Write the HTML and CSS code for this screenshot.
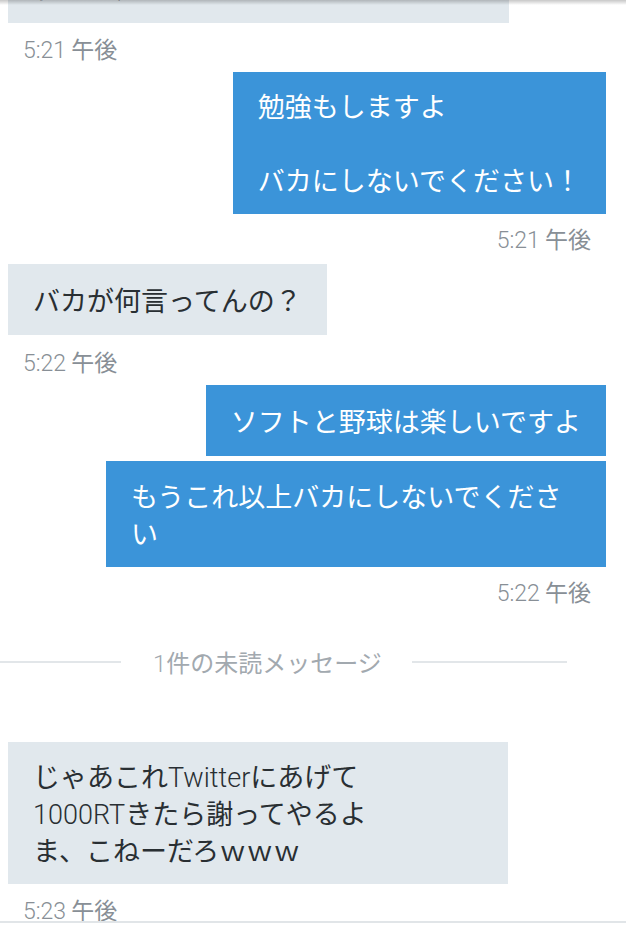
FILE: index.html
```html
<!DOCTYPE html>
<html lang="ja">
<head>
<meta charset="utf-8">
<title>DM</title>
<link rel="stylesheet" href="styles.css">
</head>
<body>
<div class="screen">
  <div class="topshade"></div>
  <div class="thread">
    <div class="msg in first"><div class="bubble">わかったよ</div></div>
    <div class="time left"><span class="lat">5:21</span> 午後</div>

    <div class="msg out"><div class="bubble multi">勉強もしますよ<br><br>バカにしないでください！</div></div>
    <div class="time right"><span class="lat">5:21</span> 午後</div>

    <div class="msg in"><div class="bubble">バカが何言ってんの？</div></div>
    <div class="time left"><span class="lat">5:22</span> 午後</div>

    <div class="msg out"><div class="bubble">ソフトと野球は楽しいですよ</div></div>
    <div class="msg out stacked"><div class="bubble two wide">もうこれ以上バカにしないでくださ<br>い</div></div>
    <div class="time right"><span class="lat">5:22</span> 午後</div>

    <div class="divider">
      <span class="rule r1"></span>
      <span class="label"><span class="lat">1</span>件の未読メッセージ</span>
      <span class="rule r2"></span>
    </div>

    <div class="msg in"><div class="bubble multi big">じゃあこれ<span class="lat">Twitter</span>にあげて<br><span class="lat">1000RT</span>きたら謝ってやるよ<br>ま、こねーだろｗｗｗ</div></div>
    <div class="time left last"><span class="lat">5:23</span> 午後</div>
  </div>
  <div class="composer"></div>
</div>
</body>
</html>
```
FILE: styles.css
```css
html, body {
  margin: 0;
  padding: 0;
  background: #ffffff;
}
body {
  width: 626px;
  height: 929px;
  overflow: hidden;
  font-family: "Noto Sans CJK JP", "Noto Sans", sans-serif;
}
.screen {
  position: relative;
  width: 626px;
  height: 929px;
  overflow: hidden;
  display: flex;
  flex-direction: column;
}
.topshade {
  position: absolute;
  left: 0;
  top: 0;
  width: 100%;
  height: 5px;
  background: linear-gradient(to bottom, rgba(0,0,0,0.22), rgba(0,0,0,0));
  z-index: 2;
}
.thread {
  display: flex;
  flex-direction: column;
}
.lat {
  font-family: "Roboto", "Noto Sans", sans-serif;
  font-weight: 300;
  line-height: 1;
}
.msg {
  display: flex;
  margin-top: 9px;
}
.msg.first {
  margin-top: -48px;
}
.msg.in {
  justify-content: flex-start;
  padding-left: 8px;
}
.msg.out {
  justify-content: flex-end;
  padding-right: 20px;
}
.msg.stacked {
  margin-top: 5px;
}
.bubble {
  font-size: 27px;
  line-height: 37px;
  padding: 17px 25px;
  white-space: nowrap;
}
.bubble.multi {
  padding: 15px 25px 16px 25px;
}
.bubble.two {
  padding: 16px 25px;
}
.msg.in .bubble {
  background: #e1e8ed;
  color: #292f33;
}
.msg.out .bubble {
  background: #3b94d9;
  color: #ffffff;
}
.bubble.big {
  width: 450px;
}
.bubble.wide {
  width: 450px;
}
.first .bubble {
  width: 451px;
}
.time {
  margin-top: 11px;
  font-size: 23px;
  line-height: 30px;
  height: 30px;
  color: #888f96;
}
.msg.first + .time {
  margin-top: 10px;
}
.time.left {
  padding-left: 23px;
}
.time.right {
  align-self: flex-end;
  padding-right: 35px;
  line-height: 27px;
}
.time.last {
  height: 26px;
  line-height: 28px;
}
.divider {
  margin-top: 39px;
  height: 30px;
  display: flex;
  align-items: center;
}
.divider .label {
  font-size: 24px;
  line-height: 30px;
  color: #a2a9af;
  margin: 0 30px 0 32px;
}
.rule {
  display: block;
  height: 2px;
  background: #e2e6e9;
}
.rule.r1 { width: 121px; }
.rule.r2 { width: 155px; }
.divider + .msg { margin-top: 65px; }
.composer {
  flex: 1;
  border-top: 2px solid #e1e5e8;
  background: #ffffff;
}
```
